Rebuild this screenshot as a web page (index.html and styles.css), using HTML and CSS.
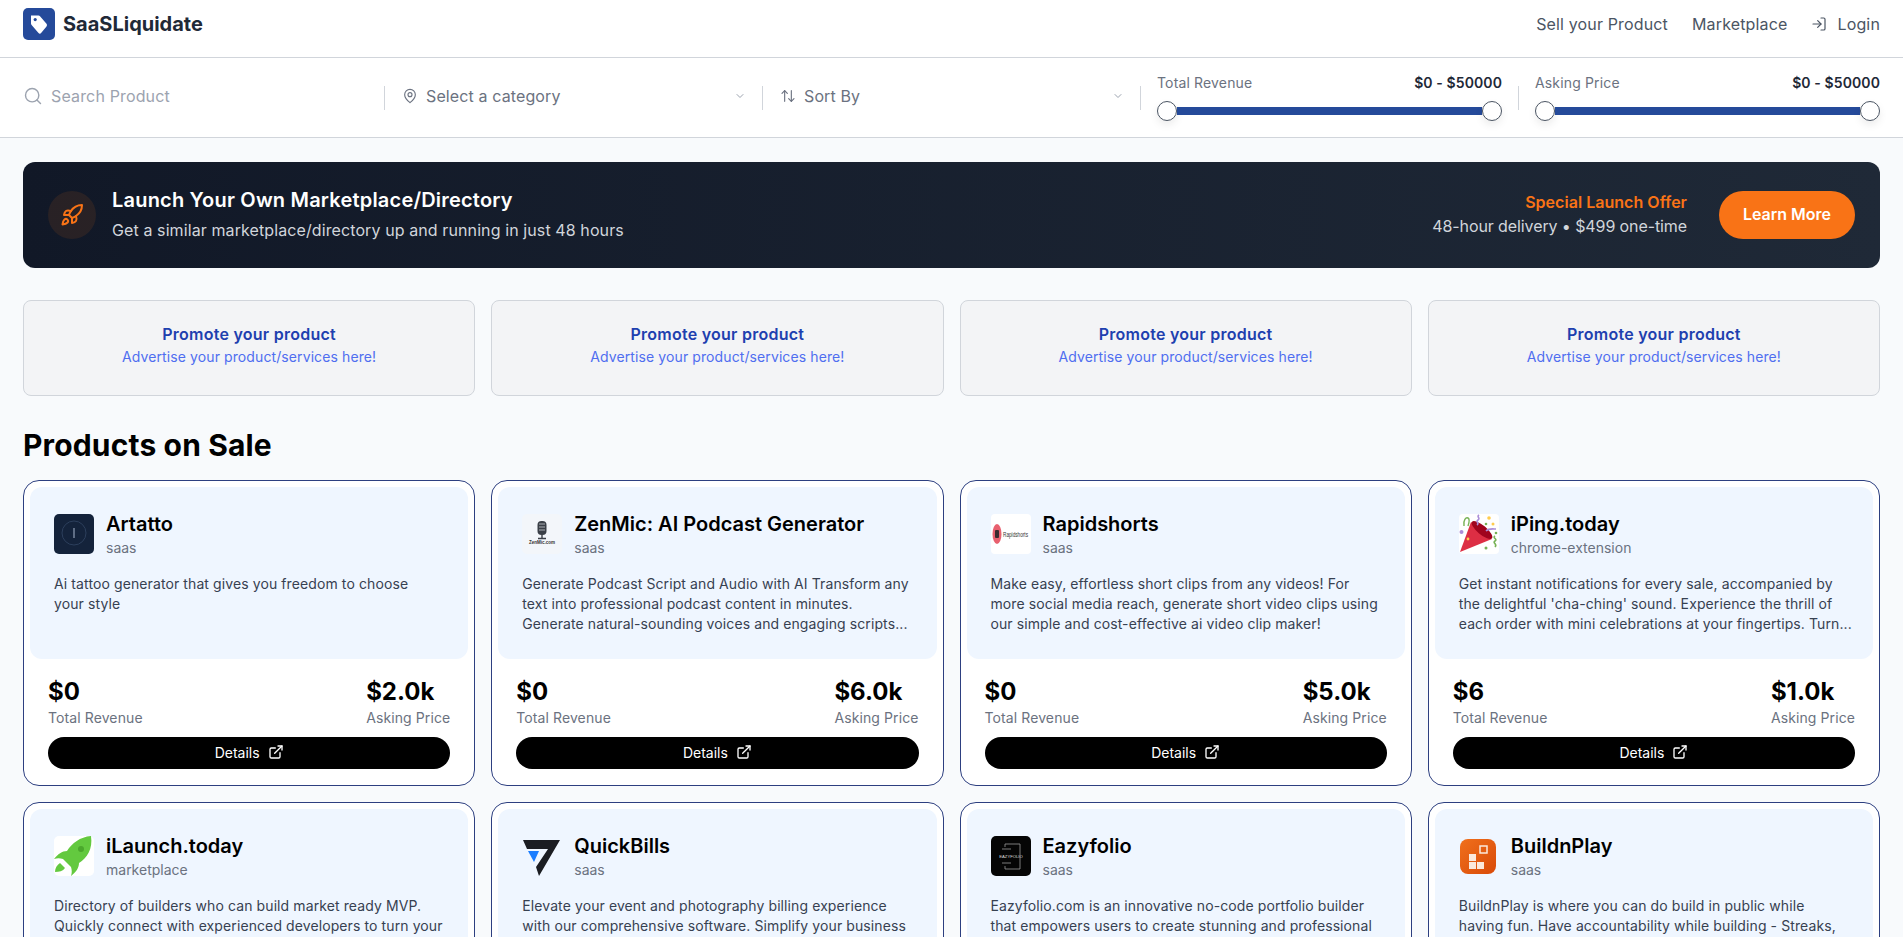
FILE: index.html
```html
<!DOCTYPE html>
<html lang="en">
<head>
<meta charset="utf-8">
<title>SaaSLiquidate</title>
<link rel="stylesheet" href="styles.css">
</head>
<body>
<header class="topbar">
  <a class="brand">
    <span class="brand-logo"><svg width="22" height="24" viewBox="0 0 22 24"><path d="M3 3.500h7.500a2 2 0 0 1 1.500.7l6.500 7.600a2 2 0 0 1 0 2.600l-5.200 6.400a2 2 0 0 1-3 0L3.600 13a2 2 0 0 1-.6-1.400z" fill="#fff"/><circle cx="7.200" cy="7.600" r="1.600" fill="#254a9a"/></svg></span>
    <span class="brand-name">SaaSLiquidate</span>
  </a>
  <nav class="nav">
    <a>Sell your Product</a>
    <a>Marketplace</a>
    <a class="login"><svg width="16" height="16" viewBox="0 0 24 24" fill="none" stroke="#4b5563" stroke-width="1.800" stroke-linecap="round" stroke-linejoin="round"><path d="M15 3h4a2 2 0 0 1 2 2v14a2 2 0 0 1-2 2h-4"/><path d="M10 17l5-5-5-5"/><path d="M15 12H3"/></svg>Login</a>
  </nav>
</header>

<section class="filters">
  <div class="filter f-search">
    <svg class="ficon" width="20" height="20" viewBox="0 0 24 24" fill="none" stroke="#9ca3af" stroke-width="1.700" stroke-linecap="round"><circle cx="11" cy="11" r="8"/><path d="M21 21l-4.300-4.300"/></svg>
    <span class="placeholder">Search Product</span>
  </div>
  <span class="sep"></span>
  <div class="filter f-select">
    <svg class="ficon" width="16" height="18" viewBox="0 0 24 24" fill="none" stroke="#6b7280" stroke-width="1.700"><path d="M20 10c0 5-5.500 10-8 12-2.500-2-8-7-8-12a8 8 0 0 1 16 0z"/><circle cx="12" cy="10" r="3"/></svg>
    <span class="select-text">Select a category</span>
    <svg class="chev" width="12" height="12" viewBox="0 0 24 24" fill="none" stroke="#9ca3af" stroke-width="2" stroke-linecap="round" stroke-linejoin="round"><path d="M6 9l6 6 6-6"/></svg>
  </div>
  <span class="sep"></span>
  <div class="filter f-select">
    <svg class="ficon" width="16" height="18" viewBox="0 0 24 24" fill="none" stroke="#6b7280" stroke-width="1.700" stroke-linecap="round" stroke-linejoin="round"><path d="M3 8l4-4 4 4"/><path d="M7 4v16"/><path d="M21 16l-4 4-4-4"/><path d="M17 20V4"/></svg>
    <span class="select-text">Sort By</span>
    <svg class="chev" width="12" height="12" viewBox="0 0 24 24" fill="none" stroke="#9ca3af" stroke-width="2" stroke-linecap="round" stroke-linejoin="round"><path d="M6 9l6 6 6-6"/></svg>
  </div>
  <span class="sep"></span>
  <div class="filter f-range">
    <div class="range-head"><span>Total Revenue</span><b>$0 - $50000</b></div>
    <div class="slider"><i class="thumb"></i><i class="track"></i><i class="thumb"></i></div>
  </div>
  <span class="sep"></span>
  <div class="filter f-range last">
    <div class="range-head"><span>Asking Price</span><b>$0 - $50000</b></div>
    <div class="slider"><i class="thumb"></i><i class="track"></i><i class="thumb"></i></div>
  </div>
</section>

<main class="main">
  <section class="banner">
    <div class="banner-left">
      <span class="rocket"><svg width="24" height="24" viewBox="0 0 24 24" fill="none" stroke="#f97316" stroke-width="2" stroke-linecap="round" stroke-linejoin="round"><path d="M4.500 16.500c-1.500 1.260-2 5-2 5s3.740-.5 5-2c.71-.84.700-2.130-.09-2.910a2.180 2.180 0 0 0-2.910-.09z"/><path d="M12 15l-3-3a22 22 0 0 1 2-3.950A12.880 12.880 0 0 1 22 2c0 2.720-.78 7.500-6 11a22.350 22.350 0 0 1-4 2z"/><path d="M9 12H4s.55-3.030 2-4c1.620-1.080 5 0 5 0"/><path d="M12 15v5s3.030-.55 4-2c1.080-1.620 0-5 0-5"/></svg></span>
      <div class="banner-copy">
        <h2 class="banner-title">Launch Your Own Marketplace/Directory</h2>
        <p class="banner-sub">Get a similar marketplace/directory up and running in just 48 hours</p>
      </div>
    </div>
    <div class="banner-right">
      <div class="offer">
        <div class="offer-title">Special Launch Offer</div>
        <div class="offer-sub">48-hour delivery • $499 one-time</div>
      </div>
      <a class="learn">Learn More</a>
    </div>
  </section>

  <section class="promos">
    <div class="promo"><strong>Promote your product</strong><span>Advertise your product/services here!</span></div>
    <div class="promo"><strong>Promote your product</strong><span>Advertise your product/services here!</span></div>
    <div class="promo"><strong>Promote your product</strong><span>Advertise your product/services here!</span></div>
    <div class="promo"><strong>Promote your product</strong><span>Advertise your product/services here!</span></div>
  </section>

  <h1 class="section-title">Products on Sale</h1>

  <section class="grid">
    <article class="card">
      <div class="card-top">
        <div class="card-head">
          <span class="logo"><svg viewBox="0 0 40 40"><rect width="40" height="40" rx="5" fill="#14233b"/><circle cx="20" cy="19" r="12" fill="none" stroke="#2c3f5c" stroke-width="1"/><path d="M20 14v10" stroke="#7f8fa6" stroke-width="1.400"/></svg></span>
          <div><h3>Artatto</h3><p class="cat">saas</p></div>
        </div>
        <p class="desc">Ai tattoo generator that gives you freedom to choose<br>your style</p>
      </div>
      <div class="stats"><div><b>$0</b><span>Total Revenue</span></div><div><b>$2.0k</b><span>Asking Price</span></div></div>
      <a class="details">Details <svg width="16" height="16" viewBox="0 0 24 24" fill="none" stroke="#fff" stroke-width="2" stroke-linecap="round" stroke-linejoin="round"><path d="M18 13v6a2 2 0 0 1-2 2H5a2 2 0 0 1-2-2V8a2 2 0 0 1 2-2h6"/><path d="M15 3h6v6"/><path d="M10 14L21 3"/></svg></a>
    </article>

    <article class="card">
      <div class="card-top">
        <div class="card-head">
          <span class="logo"><svg viewBox="0 0 40 40"><rect width="40" height="40" rx="5" fill="#f3f6fa"/><rect x="15.500" y="7" width="9" height="14" rx="4" fill="#3a3f47"/><path d="M17 10h6M17 13h6M17 16h6" stroke="#c8ccd2" stroke-width=".8"/><path d="M20 21v3M16 24.500h8" stroke="#3a3f47" stroke-width="1.400"/><text x="20" y="30" class="tiny" text-anchor="middle">ZenMic.com</text></svg></span>
          <div><h3>ZenMic: AI Podcast Generator</h3><p class="cat">saas</p></div>
        </div>
        <p class="desc">Generate Podcast Script and Audio with AI Transform any<br>text into professional podcast content in minutes.<br>Generate natural-sounding voices and engaging scripts...</p>
      </div>
      <div class="stats"><div><b>$0</b><span>Total Revenue</span></div><div><b>$6.0k</b><span>Asking Price</span></div></div>
      <a class="details">Details <svg width="16" height="16" viewBox="0 0 24 24" fill="none" stroke="#fff" stroke-width="2" stroke-linecap="round" stroke-linejoin="round"><path d="M18 13v6a2 2 0 0 1-2 2H5a2 2 0 0 1-2-2V8a2 2 0 0 1 2-2h6"/><path d="M15 3h6v6"/><path d="M10 14L21 3"/></svg></a>
    </article>

    <article class="card">
      <div class="card-top">
        <div class="card-head">
          <span class="logo"><svg viewBox="0 0 40 40"><rect width="40" height="40" rx="4" fill="#fff"/><ellipse cx="6" cy="20" rx="4.500" ry="10" fill="#e8606f"/><rect x="4" y="16" width="4" height="8" rx="1" fill="#3a2a2e"/><text x="12" y="23" class="tiny2" textLength="25" lengthAdjust="spacingAndGlyphs">Rapidshorts</text></svg></span>
          <div><h3>Rapidshorts</h3><p class="cat">saas</p></div>
        </div>
        <p class="desc">Make easy, effortless short clips from any videos! For<br>more social media reach, generate short video clips using<br>our simple and cost-effective ai video clip maker!</p>
      </div>
      <div class="stats"><div><b>$0</b><span>Total Revenue</span></div><div><b>$5.0k</b><span>Asking Price</span></div></div>
      <a class="details">Details <svg width="16" height="16" viewBox="0 0 24 24" fill="none" stroke="#fff" stroke-width="2" stroke-linecap="round" stroke-linejoin="round"><path d="M18 13v6a2 2 0 0 1-2 2H5a2 2 0 0 1-2-2V8a2 2 0 0 1 2-2h6"/><path d="M15 3h6v6"/><path d="M10 14L21 3"/></svg></a>
    </article>

    <article class="card">
      <div class="card-top">
        <div class="card-head">
          <span class="logo"><svg viewBox="0 0 40 40"><rect width="40" height="40" rx="4" fill="#fff"/><path d="M1 38L12 8l21 17z" fill="#dd2e44"/><ellipse cx="23" cy="16" rx="13" ry="4.500" transform="rotate(40 23 16)" fill="#a0041e"/><path d="M5 12c-1-6 2-9 4-8 2 1 1 5 0 8" fill="none" stroke="#77b255" stroke-width="1.400"/><path d="M20 1c-3 2 2 3-1 5s2 3-1 5" fill="none" stroke="#aa8dd8" stroke-width="1.600"/><path d="M27 17c3-3 7-2 10-2" fill="none" stroke="#aa8dd8" stroke-width="1.600"/><path d="M36 22c-3 2 3 3 0 5s3 3 0 6" fill="none" stroke="#77b255" stroke-width="1.600"/><circle cx="2.500" cy="18" r="2" fill="#aa8dd8"/><circle cx="30" cy="4" r="1.800" fill="#ffcc4d"/><circle cx="34" cy="10" r="1.500" fill="#ffcc4d"/><circle cx="27" cy="10" r="1.300" fill="#77b255"/><circle cx="37" cy="19" r="1.300" fill="#77b255"/><circle cx="27" cy="34" r="1.500" fill="#77b255"/><circle cx="9" cy="25" r="1.400" fill="#ffcc4d"/></svg></span>
          <div><h3>iPing.today</h3><p class="cat">chrome-extension</p></div>
        </div>
        <p class="desc">Get instant notifications for every sale, accompanied by<br>the delightful 'cha-ching' sound. Experience the thrill of<br>each order with mini celebrations at your fingertips. Turn...</p>
      </div>
      <div class="stats"><div><b>$6</b><span>Total Revenue</span></div><div><b>$1.0k</b><span>Asking Price</span></div></div>
      <a class="details">Details <svg width="16" height="16" viewBox="0 0 24 24" fill="none" stroke="#fff" stroke-width="2" stroke-linecap="round" stroke-linejoin="round"><path d="M18 13v6a2 2 0 0 1-2 2H5a2 2 0 0 1-2-2V8a2 2 0 0 1 2-2h6"/><path d="M15 3h6v6"/><path d="M10 14L21 3"/></svg></a>
    </article>

    <article class="card">
      <div class="card-top">
        <div class="card-head">
          <span class="logo"><svg viewBox="0 0 40 40"><rect width="40" height="40" rx="5" fill="#fff"/><path d="M37 0C26 1 18 7 13 15c-5 0-9 3-13 8 3-1 6-1 9 0l8 8c1 3 1 6 0 9 5-4 8-8 8-13 8-5 14-14 12-27z" fill="#63c93f"/><path d="M1 36c0-4 2-7 5-9l5 5c-2 3-6 4-10 4z" fill="#63c93f"/><circle cx="27" cy="13" r="3" fill="#4aa82c"/></svg></span>
          <div><h3>iLaunch.today</h3><p class="cat">marketplace</p></div>
        </div>
        <p class="desc">Directory of builders who can build market ready MVP.<br>Quickly connect with experienced developers to turn your</p>
      </div>
    </article>

    <article class="card">
      <div class="card-top">
        <div class="card-head">
          <span class="logo"><svg viewBox="0 0 40 40"><path d="M1 4h37L17 40l-3-9 12-18H5z" fill="#1b1d22"/><path d="M6 15h11l-5 11z" fill="#1a7dff"/></svg></span>
          <div><h3>QuickBills</h3><p class="cat">saas</p></div>
        </div>
        <p class="desc">Elevate your event and photography billing experience<br>with our comprehensive software. Simplify your business</p>
      </div>
    </article>

    <article class="card">
      <div class="card-top">
        <div class="card-head">
          <span class="logo"><svg viewBox="0 0 40 40"><rect width="40" height="40" rx="5" fill="#050505"/><path d="M14 11V8h15v25H14v-3" fill="none" stroke="#9a9a9a" stroke-width=".8"/><path d="M11 13h9M11 27h9" stroke="#9a9a9a" stroke-width=".8"/><text x="20" y="21.500" class="tiny3" text-anchor="middle">EAZYFOLIO</text></svg></span>
          <div><h3>Eazyfolio</h3><p class="cat">saas</p></div>
        </div>
        <p class="desc">Eazyfolio.com is an innovative no-code portfolio builder<br>that empowers users to create stunning and professional</p>
      </div>
    </article>

    <article class="card">
      <div class="card-top">
        <div class="card-head">
          <span class="logo"><svg viewBox="0 0 40 40"><defs><linearGradient id="bp" x1="0" y1="0" x2="1" y2="1"><stop offset="0" stop-color="#f0701c"/><stop offset="1" stop-color="#d94a08"/></linearGradient></defs><rect x="1" y="3" width="36" height="35" rx="8" fill="url(#bp)"/><rect x="10" y="18" width="7" height="7" fill="#fbe9dc"/><rect x="10" y="26" width="7" height="7" fill="#fbe9dc"/><rect x="18" y="26" width="7" height="7" fill="#fbe9dc"/><rect x="21" y="10" width="7" height="7" fill="none" stroke="#fbe9dc" stroke-width="1.500"/></svg></span>
          <div><h3>BuildnPlay</h3><p class="cat">saas</p></div>
        </div>
        <p class="desc">BuildnPlay is where you can do build in public while<br>having fun. Have accountability while building - Streaks,</p>
      </div>
    </article>
  </section>
</main>
</body>
</html>
```

FILE: styles.css
```css
* { box-sizing: border-box; }
html, body { margin: 0; padding: 0; height: 937px; overflow: hidden; }
body { font-family: "Inter", "Liberation Sans", sans-serif; background: #f8fafc; color: #111827; font-size: 14px; }
h1, h2, h3, p { margin: 0; }

.topbar { height: 58px; background: #fff; border-bottom: 1px solid #d1d5db; padding: 0 23px 9px; display: flex; align-items: center; justify-content: space-between; }
.brand { display: flex; align-items: center; gap: 8px; }
.brand-logo { width: 32px; height: 32px; background: #254a9a; border-radius: 5px; display: flex; align-items: center; justify-content: center; }
.brand-name { font-size: 20px; font-weight: 700; color: #1f2937; }
.nav { display: flex; align-items: center; gap: 24px; font-size: 16px; letter-spacing: .15px; color: #4b5563; }
.login { display: flex; align-items: center; gap: 10px; }

.filters { height: 80px; background: #fff; border-bottom: 1px solid #d1d5db; padding: 0 23px; display: flex; align-items: center; }
.sep { width: 1px; height: 24px; background: #d1d5db; flex: none; }
.filter { display: flex; align-items: center; height: 100%; }
.f-search { width: 361px; gap: 8px; padding-bottom: 3px; }
.f-select { width: 377px; padding: 0 16px 3px 17px; gap: 8px; }
.f-range { width: 377px; padding: 15px 16px 0; flex-direction: column; align-items: stretch; justify-content: flex-start; }
.f-range.last { width: auto; flex: 1; padding-right: 0; }
.placeholder { font-size: 16px; letter-spacing: .15px; color: #9ca3af; }
.select-text { font-size: 16px; letter-spacing: .12px; color: #6b7280; flex: 1; }
.ficon, .chev { flex: none; }
.range-head { display: flex; justify-content: space-between; font-size: 14px; line-height: 20px; letter-spacing: .15px; color: #6b7280; }
.range-head b { font-weight: 600; letter-spacing: .1px; color: #1f2937; }
.slider { display: flex; align-items: center; margin-top: 8px; height: 20px; }
.track { flex: 1; height: 8px; background: #254a9a; }
.thumb { width: 20px; height: 20px; border-radius: 50%; background: #fff; border: 1px solid #4b5563; box-shadow: 0 4px 8px rgba(0,0,0,.08); flex: none; }

.main { padding: 24px 23px 0; }
.banner { height: 106px; border-radius: 12px; background: linear-gradient(90deg, #111827, #1f2937); padding: 0 25px; display: flex; align-items: center; justify-content: space-between; }
.banner-left { display: flex; align-items: center; gap: 16px; }
.banner-copy { padding-bottom: 2px; }
.rocket { width: 48px; height: 48px; border-radius: 50%; background: rgba(249,115,22,.1); display: flex; align-items: center; justify-content: center; }
.banner-title { font-size: 20px; line-height: 28px; font-weight: 600; letter-spacing: .2px; color: #fff; }
.banner-sub { font-size: 16px; line-height: 24px; margin-top: 4px; letter-spacing: .1px; color: #d1d5db; }
.banner-right { display: flex; align-items: center; gap: 32px; }
.offer { text-align: right; padding-bottom: 2px; }
.offer-title { font-size: 16px; line-height: 24px; font-weight: 600; letter-spacing: .03px; color: #f97316; }
.offer-sub { font-size: 16px; line-height: 24px; letter-spacing: -.1px; color: #d1d5db; }
.learn { width: 136px; height: 48px; border-radius: 24px; background: #f97316; color: #fff; font-size: 16px; font-weight: 600; padding-bottom: 2px; display: flex; align-items: center; justify-content: center; }

.promos { margin-top: 32px; display: grid; grid-template-columns: repeat(4, minmax(0, 1fr)); gap: 16px; }
.promo { height: 96px; background: #f3f4f6; border: 1px solid #d1d5db; border-radius: 8px; padding-bottom: 7px; display: flex; flex-direction: column; align-items: center; justify-content: center; }
.promo strong { font-size: 16px; line-height: 24px; font-weight: 600; letter-spacing: .25px; margin-bottom: 1px; color: #1e40af; }
.promo span { font-size: 14px; line-height: 20px; letter-spacing: .1px; color: #4f6ef0; }

.section-title { margin-top: 31px; font-size: 30px; line-height: 36px; font-weight: 700; letter-spacing: .15px; color: #000; }

.grid { margin-top: 17px; display: grid; grid-template-columns: repeat(4, minmax(0, 1fr)); gap: 16px; }
.card { background: #fff; border: 1px solid #2d3f80; border-radius: 16px; padding: 6px 6px 16px; height: 306px; }
.card-top { background: #eff6ff; border-radius: 12px; padding: 23px 24px 25px; height: 172px; }
.card-head { display: flex; align-items: center; gap: 12px; }
.logo { width: 40px; height: 40px; flex: none; display: block; }
.logo svg { display: block; width: 40px; height: 40px; }
.tiny { font-size: 4.500px; font-family: "Liberation Sans", sans-serif; font-weight: 700; fill: #333; }
.tiny2 { font-size: 8px; font-family: "Liberation Sans", sans-serif; fill: #333; }
.tiny3 { font-size: 4.200px; font-family: "Liberation Sans", sans-serif; fill: #ddd; }
h3 { font-size: 20px; line-height: 28px; font-weight: 600; color: #000; }
.cat { font-size: 14px; line-height: 20px; color: #6b7280; }
.desc { margin-top: 16px; font-size: 14px; line-height: 20px; letter-spacing: .1px; white-space: nowrap; color: #374151; }
.stats { margin: 17px 18px 0; display: flex; justify-content: space-between; }
.stats b { display: block; font-size: 24px; line-height: 32px; font-weight: 700; color: #000; }
.stats span { display: block; font-size: 14px; line-height: 20px; letter-spacing: .1px; color: #6b7280; }
.details { margin: 9px 18px 0; height: 32px; border-radius: 16px; background: #000; color: #fff; font-size: 14px; padding-bottom: 2px; display: flex; align-items: center; justify-content: center; gap: 8px; }
```
